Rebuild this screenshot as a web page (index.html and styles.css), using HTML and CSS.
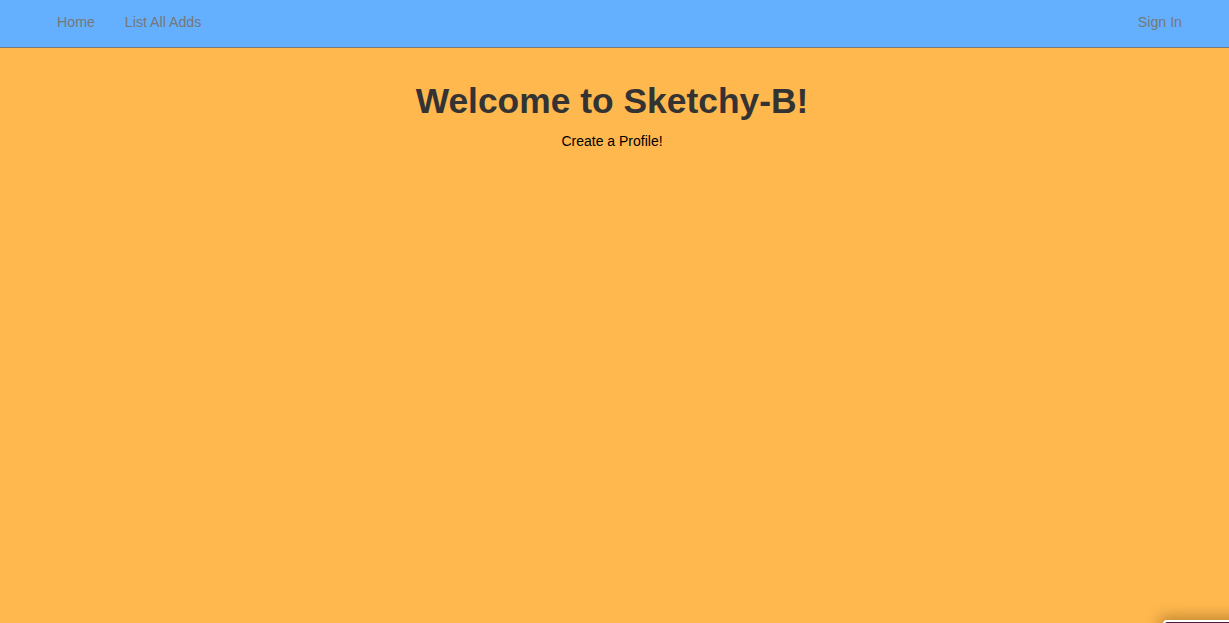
FILE: index.html
```html
<!DOCTYPE html>
<html>
<head>
<meta charset="utf-8">
<link rel="stylesheet" href="styles.css">
</head>
<body>
<nav class="navbar">
  <ul class="nav-left">
    <li><a href="#">Home</a></li>
    <li><a href="#">List All Adds</a></li>
  </ul>
  <ul class="nav-right">
    <li><a href="#">Sign In</a></li>
  </ul>
</nav>
<main class="content">
  <h1 class="title">Welcome to Sketchy-B!</h1>
  <p class="subtitle">Create a Profile!</p>
</main>
<div class="corner-widget"></div>
</body>
</html>
```

FILE: styles.css
```css
html, body {
  margin: 0;
  padding: 0;
  height: 100%;
}
body {
  background: #ffb84e;
  font-family: "Liberation Sans", Arial, sans-serif;
  font-size: 14px;
  color: #333;
  overflow: hidden;
}
.navbar {
  display: flex;
  justify-content: space-between;
  align-items: flex-start;
  height: 47px;
  background: #64b0ff;
  border-bottom: 1px solid #7a7a7a;
  box-sizing: content-box;
  padding: 0 32px 0 42px;
}
.navbar ul {
  list-style: none;
  margin: 0;
  padding: 0;
  display: flex;
}
.navbar a {
  display: block;
  padding: 0 15px;
  line-height: 44px;
  color: #777;
  text-decoration: none;
  font-size: 14.2px;
}
.content {
  text-align: center;
  padding-right: 5px;
}
.title {
  margin: 33px 0 0;
  font-size: 35.4px;
  font-weight: bold;
  line-height: 40px;
  color: #333;
}
.subtitle {
  margin: 10px 0 0;
  color: #000;
  font-size: 14px;
  line-height: 20px;
}
.corner-widget {
  position: fixed;
  left: 1163px;
  top: 620px;
  width: 80px;
  height: 20px;
  background: #4a1c3a;
  border: 2px solid #fff;
  border-radius: 4px;
  box-shadow: 0 0 14px 4px rgba(120, 80, 20, 0.45);
}
```
